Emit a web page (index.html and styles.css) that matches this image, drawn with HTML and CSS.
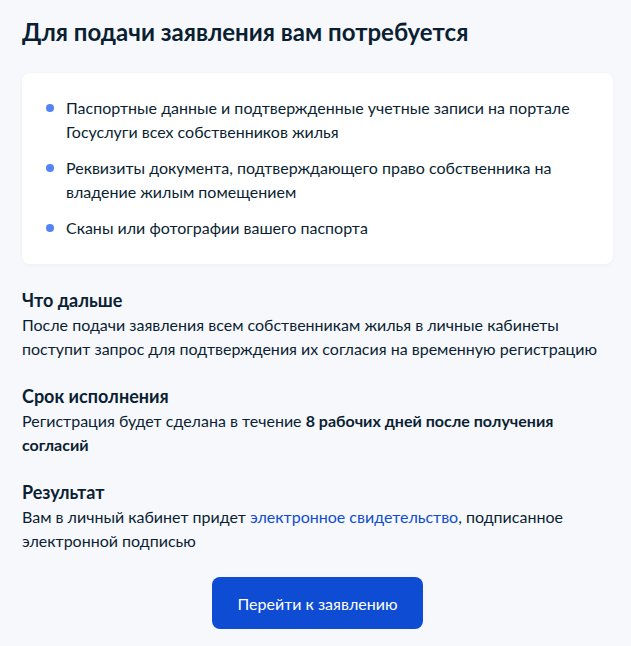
FILE: index.html
```html
<!DOCTYPE html>
<html lang="ru">
<head>
    <meta charset="UTF-8">
    <meta name="viewport" content="width=device-width, initial-scale=1.0">
    <title>Временная регистрация</title>
    <link rel="stylesheet" href="styles.css">
</head>
<body>
    <div class="container">
        <h1 class="title">Для подачи заявления вам потребуется</h1>

        <div class="card">
            <ul class="req-list">
                <li>Паспортные данные и подтвержденные учетные записи на портале Госуслуги всех собственников жилья</li>
                <li>Реквизиты документа, подтверждающего право собственника на владение жилым помещением</li>
                <li>Сканы или фотографии вашего паспорта</li>
            </ul>
        </div>

        <div class="info">
            <h3>Что дальше</h3>
            <p>После подачи заявления всем собственникам жилья в личные кабинеты поступит запрос для подтверждения их согласия на временную регистрацию</p>
        </div>

        <div class="info">
            <h3>Срок исполнения</h3>
            <p>Регистрация будет сделана в течение <b>8 рабочих дней после получения согласий</b></p>
        </div>

        <div class="info">
            <h3>Результат</h3>
            <p>Вам в личный кабинет придет <a href="#">электронное свидетельство</a>, подписанное электронной подписью</p>
        </div>

        <div class="actions">
            <button class="btn">Перейти к заявлению</button>
        </div>
    </div>
</body>
</html>
```

FILE: styles.css
```css
* {
    margin: 0;
    padding: 0;
    box-sizing: border-box;
    font-family: Lato, 'Noto Sans', sans-serif;
}

:root {
    --text-color: #0b1f33;
    --primary-color: #0d4cd3;
    --bullet-color: #5284f5;
    --bg-color: #f7f8fc;
}

body {
    background: var(--bg-color);
    color: var(--text-color);
}

.container {
    padding: 16px 18px 17px 22px;
}

.title {
    font-size: 24px;
    line-height: 32px;
    font-weight: 700;
    margin-bottom: 25px;
}

.card {
    background: white;
    border-radius: 8px;
    padding: 23px 24px 24px 24px;
    box-shadow: 0 1px 4px rgba(11, 31, 51, 0.04);
    margin-bottom: 24px;
}

.req-list {
    list-style: none;
}

.req-list li {
    position: relative;
    padding-left: 20px;
    font-size: 16px;
    line-height: 24px;
    margin-bottom: 12px;
}

.req-list li:last-child {
    margin-bottom: 0;
}

.req-list li::before {
    content: '';
    position: absolute;
    left: 0;
    top: 8px;
    width: 8px;
    height: 8px;
    border-radius: 50%;
    background: var(--bullet-color);
}

.info {
    margin-bottom: 23px;
}

.info h3 {
    font-size: 18px;
    line-height: 24px;
    font-weight: 700;
    margin-bottom: 1px;
}

.info p {
    font-size: 16px;
    line-height: 24px;
}

.info a {
    color: var(--primary-color);
    text-decoration: none;
}

.actions {
    display: flex;
    justify-content: center;
    padding-top: 1px;
}

.btn {
    background: var(--primary-color);
    color: white;
    border: none;
    border-radius: 8px;
    width: 211px;
    height: 52px;
    font-size: 16px;
    cursor: pointer;
}
```
